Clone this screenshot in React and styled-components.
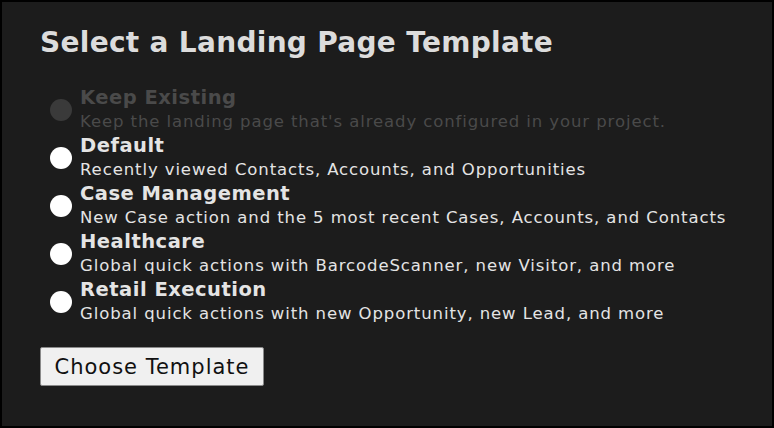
import React from 'react';
import styled, { createGlobalStyle } from 'styled-components';

const GlobalStyle = createGlobalStyle`
  html, body {
    margin: 0;
    padding: 0;
    background: #000000;
  }
  body {
    font-family: "DejaVu Sans", Verdana, sans-serif;
  }
`;

const Frame = styled.div`
  box-sizing: border-box;
  width: 774px;
  height: 428px;
  border: 2px solid #000000;
  background-color: #1c1c1c;
  padding: 24px 38px 0 38px;
`;

const Title = styled.h1`
  margin: 0;
  font-size: 28px;
  font-weight: 700;
  letter-spacing: 0.3px;
  color: #dcdcdc;
  line-height: 34px;
`;

const OptionList = styled.div`
  display: flex;
  flex-direction: column;
  margin-top: 26px;
`;

const Option = styled.label`
  display: flex;
  align-items: center;
  gap: 8px;
  height: 48px;
  color: ${props => (props.disabled ? '#4a4a4a' : '#e4e4e4')};
`;

const Radio = styled.span`
  flex: none;
  width: 22px;
  height: 22px;
  border-radius: 50%;
  margin-left: 10px;
  background: ${props => (props.disabled ? '#3a3a3a' : '#ffffff')};
`;

const Texts = styled.div`
  display: flex;
  flex-direction: column;
`;

const Name = styled.span`
  font-size: 19.5px;
  font-weight: 700;
  letter-spacing: 0.5px;
  line-height: 24px;
`;

const Desc = styled.span`
  font-size: 16.5px;
  letter-spacing: 0.9px;
  line-height: 24px;
`;

const Button = styled.button`
  display: block;
  margin-top: 21px;
  width: 224px;
  height: 39px;
  padding: 0;
  border: 1px solid #8a8a8a;
  border-radius: 2px;
  background: #f0f0f0;
  color: #111111;
  font-family: "DejaVu Sans", Verdana, sans-serif;
  font-size: 21px;
  letter-spacing: 1px;
`;

const options = [
  { name: 'Keep Existing', desc: "Keep the landing page that's already configured in your project.", disabled: true },
  { name: 'Default', desc: 'Recently viewed Contacts, Accounts, and Opportunities' },
  { name: 'Case Management', desc: 'New Case action and the 5 most recent Cases, Accounts, and Contacts' },
  { name: 'Healthcare', desc: 'Global quick actions with BarcodeScanner, new Visitor, and more' },
  { name: 'Retail Execution', desc: 'Global quick actions with new Opportunity, new Lead, and more' },
];

const App = () => (
  <>
    <GlobalStyle />
    <Frame>
      <Title>Select a Landing Page Template</Title>
      <OptionList>
        {options.map(o => (
          <Option key={o.name} disabled={o.disabled}>
            <Radio disabled={o.disabled} />
            <Texts>
              <Name>{o.name}</Name>
              <Desc>{o.desc}</Desc>
            </Texts>
          </Option>
        ))}
      </OptionList>
      <Button>Choose Template</Button>
    </Frame>
  </>
);

export default App;
